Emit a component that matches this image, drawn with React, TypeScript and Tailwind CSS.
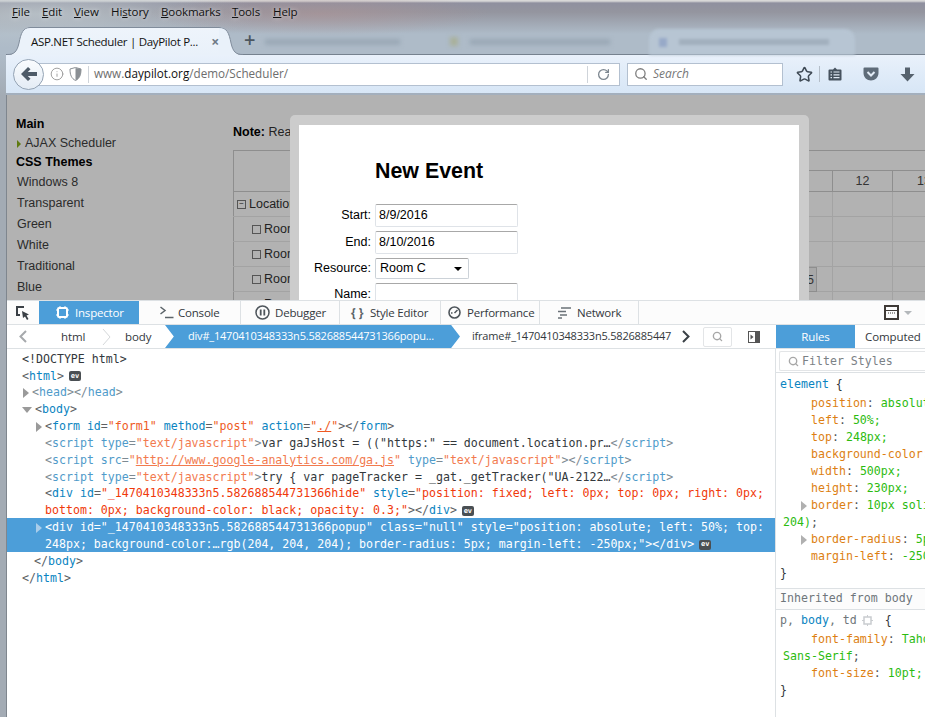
import React from 'react';
import { Info, RotateCw, Search, Star } from 'lucide-react';

type Seg = [string, string];

const B = 'text-[#5c6063]';
const N = 'text-[#0a84c1]';
const V = 'text-[#ee5a24]';
const R = 'text-[#f0390a]';
const T = 'text-[#33383c]';
const FB = 'text-[#7d8a92]';
const FN = 'text-[#4f9bca]';
const FV = 'text-[#f27a4e]';

const ui = "font-['Open_Sans',sans-serif]";
const page = "font-['Liberation_Sans',sans-serif]";
const mono = "font-['DejaVu_Sans_Mono',monospace]";

function Badge() {
  return (
    <span className="ml-[5px] inline-flex h-[10px] w-[12px] items-center justify-center rounded-[2px] bg-[#4a4f53] text-[7px] font-bold leading-none text-white">
      ev
    </span>
  );
}

function Arrow({ open, light }: { open?: boolean; light?: boolean }) {
  if (open) return <span className="mr-[3px] h-0 w-0 border-x-[5px] border-t-[6px] border-x-transparent border-t-[#9a9a9a]" />;
  return <span className={`mr-[3px] h-0 w-0 border-y-[5px] border-l-[6px] border-y-transparent ${light ? 'border-l-[#a9cdea]' : 'border-l-[#9a9a9a]'}`} />;
}

function CodeRow({ pl, segs, arrow, open, ev }: { pl: string; segs: Seg[]; arrow?: boolean; open?: boolean; ev?: boolean }) {
  return (
    <div className={`flex h-[16.85px] items-center whitespace-pre pt-[2px] ${pl}`}>
      {arrow && <Arrow open={open} />}
      {segs.map(([text, cls], i) => (
        <span key={i} className={cls}>{text}</span>
      ))}
      {ev && <Badge />}
    </div>
  );
}

function Scheduler() {
  const rows = ['Locations', 'Room A', 'Room B', 'Room C', 'Room D'];
  return (
    <div className="mt-[9px] w-[760px] border-t border-[#8e8e8e]">
      <div className="flex h-[41px] border-b border-[#8e8e8e]">
        <div className="w-[540px] border-l border-[#8e8e8e]" />
        <div className="flex-1">
          <div className="h-[20px] border-b border-[#8e8e8e]" />
          <div className="flex h-[20px] text-[12.5px] text-[#333]">
            <div className="w-[60px] border-r border-[#8e8e8e]" />
            <div className="flex w-[60px] items-center justify-center border-r border-[#8e8e8e]">12</div>
            <div className="flex w-[60px] items-center pl-[24px]">13</div>
          </div>
        </div>
      </div>
      {rows.map((r, i) => (
        <div key={r} className="flex h-[25px] border-b border-[#a3a3a3]">
          <div className={`flex w-[540px] items-center border-x border-[#8e8e8e] text-[12.5px] text-[#222] ${i === 0 ? 'pl-[3px]' : 'pl-[18px]'}`}>
            <span className="mr-[3px] flex h-[9px] w-[9px] items-center justify-center border border-[#555] text-[8px] leading-none">{i === 0 ? '−' : ''}</span>
            {r}
          </div>
          <div className="flex flex-1">
            <div className="w-[60px] border-r border-[#a3a3a3]">
              {i === 3 && <div className="ml-[-10px] h-[25px] w-[54px] border border-[#8e8e8e] bg-[#a8a8a8] pr-[2px] pt-[3px] text-right text-[12.5px] text-[#333]">5</div>}
            </div>
            <div className="w-[60px] border-r border-[#a3a3a3]" />
            <div className="w-[60px]" />
          </div>
        </div>
      ))}
    </div>
  );
}

function Field({ label, value, select }: { label: string; value?: string; select?: boolean }) {
  return (
    <div className="flex items-center">
      <div className="w-[76px] pr-[4px] text-right text-[12.5px] text-black">{label}</div>
      {select ? (
        <div className="flex h-[21px] w-[94px] items-center justify-between rounded-[2px] border border-[#ccd2d8] border-t-[#a8a8a8] pl-[4px] pr-[6px] text-[12.5px] text-black">
          Room C
          <span className="h-0 w-0 border-x-[4px] border-t-[4px] border-x-transparent border-t-black" />
        </div>
      ) : (
        <div className="flex h-[23px] w-[143px] items-center rounded-[2px] border border-[#dfe3e8] border-t-[#a8a8a8] pl-[3px] text-[12.5px] text-black">
          {value}
        </div>
      )}
    </div>
  );
}

function Menu() {
  const items: [string, string, string, string][] = [
    ['', 'F', 'ile', 'w-[30px]'],
    ['', 'E', 'dit', 'w-[32px]'],
    ['', 'V', 'iew', 'w-[37px]'],
    ['Hi', 's', 'tory', 'w-[50px]'],
    ['', 'B', 'ookmarks', 'w-[71px]'],
    ['', 'T', 'ools', 'w-[41px]'],
    ['', 'H', 'elp', 'w-[30px]'],
  ];
  return (
    <div className={`flex h-[24px] items-center pl-[12px] text-[11.5px] tracking-[-0.1px] text-[#111] ${ui}`}>
      {items.map(([a, u, c, w]) => (
        <span key={u + c} className={`whitespace-nowrap [text-shadow:0_0_4px_#ffffffaa] ${w}`}>
          {a}<span className="underline">{u}</span>{c}
        </span>
      ))}
    </div>
  );
}

function TabStrip() {
  return (
    <div className="relative z-10 -mb-px flex h-[31px] items-end pl-[7px]">
      <svg width="23" height="28" viewBox="0 0 23 28" className="shrink-0">
        <path d="M0 28 C7 28 10 25 12 16 C14 6 16 0 23 0 V28 Z" fill="#ebf2fa" />
        <path d="M0 27.500 C7 27.500 10 25 12 16 C14 6 16 0.500 23 0.500" fill="none" stroke="#808c9b" />
      </svg>
      <div className={`flex h-[28px] w-[189px] shrink-0 items-center border-t border-[#808c9b] bg-[linear-gradient(#eef4fb,#e9f1fa)] pl-[1px] text-[11.5px] tracking-[-0.3px] text-[#111] ${ui}`}>
        <span className="w-[172px] whitespace-nowrap">ASP.NET Scheduler | DayPilot P...</span>
        <span className="ml-[10px] text-[14px] font-bold leading-none text-[#6f7a86]">×</span>
      </div>
      <svg width="24" height="28" viewBox="0 0 24 28" className="shrink-0">
        <path d="M24 28 C17 28 14 25 12 16 C10 6 8 0 0 0 V28 Z" fill="#e9f1fa" />
        <path d="M24 27.500 C17 27.500 14 25 12 16 C10 6 8 0.500 0 0.500" fill="none" stroke="#808c9b" />
      </svg>
      <span className={`mb-[5px] ml-[1px] w-[11px] text-[20px] font-semibold leading-none text-[#4c5660] ${ui}`}>+</span>
      <div className="mb-[10px] ml-[10px] h-[6px] w-[135px] bg-[#9aa8b6] blur-[2px]" />
      <div className="mb-[9px] ml-[50px] h-[9px] w-[8px] bg-[#a9b09a] blur-[2px]" />
      <div className="mb-[10px] ml-[12px] h-[6px] w-[140px] bg-[#9aa8b6] blur-[2px]" />
      <div className="ml-[39px] flex h-[26px] w-[206px] items-center rounded-t-[10px] bg-[#b7c5d3] pl-[10px] blur-[1.5px]">
        <div className="h-[9px] w-[8px] bg-[#97a9c8]" />
        <div className="ml-[12px] h-[6px] w-[150px] bg-[#a1afbd]" />
      </div>
    </div>
  );
}

function NavBar() {
  return (
    <div className="ml-[6px] flex h-[41px] items-center border-y border-b-2 border-t-[#76828f] border-b-[#a3afbd] bg-[linear-gradient(#e9f1fb,#d7e6f6)] pl-[24px] pr-[9px]">
      <div className="relative flex h-[23px] w-[590px] items-center border border-[#b3c0d0] bg-white pl-[19px]">
        <div className="absolute left-[-18px] top-[-5px] flex h-[31px] w-[31px] items-center justify-center rounded-full border border-[#94a3b4] bg-[linear-gradient(#fafcfe,#e4ecf5)]">
          <svg width="16" height="14" viewBox="0 0 16 14"><path d="M7 0 L9.500 2.300 L6.800 5 H16 V9 H6.800 L9.500 11.700 L7 14 L0 7 Z" fill="#4e5b68" /></svg>
        </div>
        <Info size={14} strokeWidth={1.6} className="text-[#9a9a9a]" />
        <svg width="13" height="14" viewBox="0 0 13 14" className="ml-[5px]"><path d="M6.500 0.500 L12 2 C12 8 10.500 11.500 6.500 13.500 C2.500 11.500 1 8 1 2 Z" fill="#fff" stroke="#8a8f94" /><path d="M6.500 1 L12 2 C12 8 10.500 11.500 6.500 13.500 Z" fill="#8a8f94" /></svg>
        <div className="ml-[6px] mr-[5px] h-[17px] w-px bg-[#cfd4da]" />
        <span className={`text-[11.7px] text-[#6d6d6d] ${ui}`}>www.<span className="text-[#111]">daypilot.org</span>/demo/Scheduler/</span>
        <div className="ml-auto flex h-[17px] w-[32px] items-center justify-center border-l border-[#cfd4da]">
          <RotateCw size={13} strokeWidth={2.4} className="text-[#7d8790]" />
        </div>
      </div>
      <div className={`ml-[7px] flex h-[23px] w-[156px] shrink-0 items-center border border-[#b3c0d0] bg-white pl-[6px] text-[12px] italic text-[#777] ${ui}`}>
        <Search size={14} strokeWidth={2.2} className="mr-[5px] text-[#7d7d7d]" />
        Search
      </div>
      <Star size={17} strokeWidth={2.2} className="ml-[13px] text-[#3f4a55]" />
      <div className="ml-[6px] h-[16px] w-px bg-[#b4bec9]" />
      <svg width="14" height="14" viewBox="0 0 14 14" className="ml-[8px]">
        <path d="M1.500 2.500 H5 L7 0.500 L9 2.500 H12.500 A1 1 0 0 1 13.500 3.500 V12.500 A1 1 0 0 1 12.500 13.500 H1.500 A1 1 0 0 1 0.500 12.500 V3.500 A1 1 0 0 1 1.500 2.500 Z" fill="#46525e" />
        <path d="M2.500 5 H4 M5.500 5 H11.500 M2.500 7.800 H4 M5.500 7.800 H11.500 M2.500 10.600 H4 M5.500 10.600 H11.500" stroke="#dfe9f4" strokeWidth="1.200" />
      </svg>
      <svg width="16" height="14" viewBox="0 0 16 14" className="ml-[21px]">
        <path d="M1.500 0.500 H14.500 A1 1 0 0 1 15.500 1.500 V6 C15.500 10.500 12 13.500 8 13.500 C4 13.500 0.500 10.500 0.500 6 V1.500 A1 1 0 0 1 1.500 0.500 Z" fill="#5f6c79" />
        <path d="M4.500 5 L8 8.500 L11.500 5" fill="none" stroke="#e3ecf6" strokeWidth="2" />
      </svg>
      <svg width="15" height="15" viewBox="0 0 15 15" className="ml-[21px]"><path d="M5 0.500 H10 V7 H14.500 L7.500 14.500 L0.500 7 H5 Z" fill="#56626e" /></svg>
    </div>
  );
}

function PageArea() {
  const themes = ['Windows 8', 'Transparent', 'Green', 'White', 'Traditional', 'Blue'];
  return (
    <div className={`relative ml-[6px] flex h-[205px] overflow-hidden border-l border-[#7f868e] bg-[#b2b2b2] ${page}`}>
      <div className="w-[226px] shrink-0 pl-[9px] pt-[20px] text-[12.5px] text-[#2b2b2b]">
        <div className="h-[19px] font-bold text-black">Main</div>
        <div className="flex h-[19px] items-center pl-px">
          <span className="mr-[4px] h-0 w-0 border-y-[4px] border-l-[4px] border-y-transparent border-l-[#5f7a10]" />
          AJAX Scheduler
        </div>
        <div className="h-[19px] font-bold text-black">CSS Themes</div>
        {themes.map((t) => (
          <div key={t} className="flex h-[21px] items-center pl-px">{t}</div>
        ))}
      </div>
      <div className="pt-[28px] text-[12.5px] text-[#222]">
        <div className="h-[18px]"><b className="text-black">Note:</b> Read</div>
        <Scheduler />
      </div>
      {/* modal */}
      <div className="absolute left-[283px] top-[20px] h-[230px] w-[519px] rounded-[5px] bg-[#cccccc] pl-[9px] pr-[10px] pt-[10px]">
        <div className="h-[230px] bg-white">
          <div className="pl-[76px] pt-[32px] text-[21.4px] font-bold leading-[28px] text-black">New Event</div>
          <div className="flex flex-col gap-[4px] pt-[19px]">
            <Field label="Start:" value="8/9/2016" />
            <Field label="End:" value="8/10/2016" />
            <Field label="Resource:" select />
            <Field label="Name:" />
          </div>
        </div>
      </div>
    </div>
  );
}

function DevToolbar() {
  return (
    <div className={`flex h-[25px] items-stretch whitespace-nowrap border-y border-[#dde1e4] bg-[#fcfcfc] text-[11.5px] tracking-[-0.2px] text-[#33383c] ${ui}`}>
      <div className="flex w-[32px] shrink-0 items-center justify-center">
        <svg width="14" height="14" viewBox="0 0 14 14"><path d="M8 1 H1 V9 H4" fill="none" stroke="#3a4046" strokeWidth="2" /><path d="M6 5 L13 8.500 L10.500 9.500 L12.500 13 L11 14 L9 10.500 L7 12 Z" fill="#3a4046" /></svg>
      </div>
      <div className="flex w-[100px] shrink-0 items-center bg-[#4c9ed9] pl-[17px] text-white">
        <svg width="13" height="13" viewBox="0 0 13 13" className="mr-[6px]"><rect x="2" y="2" width="9" height="9" rx="1" fill="none" stroke="#fff" strokeWidth="2" /><path d="M4 0 V2 M9 0 V2 M4 11 V13 M9 11 V13 M0 4 H2 M0 9 H2 M11 4 H13 M11 9 H13" stroke="#fff" /></svg>
        Inspector
      </div>
      <div className="flex w-[102px] shrink-0 items-center border-r border-[#dde1e4] pl-[21px]">
        <svg width="14" height="13" viewBox="0 0 14 13" className="mr-[4px]"><path d="M0.500 1 L5 4.500 L0.500 8 M5 11.500 H13.500" fill="none" stroke="#5c6469" strokeWidth="1.500" /></svg>
        Console
      </div>
      <div className="flex w-[99px] shrink-0 items-center border-r border-[#dde1e4] pl-[14px]">
        <svg width="15" height="15" viewBox="0 0 15 15" className="mr-[5px]"><circle cx="7.500" cy="7.500" r="6.500" fill="none" stroke="#4e555b" strokeWidth="1.500" /><path d="M5.700 4.500 V10.500 M9.300 4.500 V10.500" stroke="#4e555b" strokeWidth="1.800" /></svg>
        Debugger
      </div>
      <div className="flex w-[101px] shrink-0 items-center border-r border-[#dde1e4] pl-[11px]">
        <span className="mr-[5px] w-[14px] text-[12px] font-bold tracking-normal text-[#5c6469]">{'{ }'}</span>
        Style Editor
      </div>
      <div className="flex w-[99px] shrink-0 items-center border-r border-[#dde1e4] pl-[7px]">
        <svg width="13" height="13" viewBox="0 0 13 13" className="mr-[6px]"><circle cx="6.500" cy="6.500" r="5.500" fill="none" stroke="#4e555b" strokeWidth="1.600" /><path d="M6.500 7 L9.500 4 M3 7 H4.500" stroke="#4e555b" strokeWidth="1.500" /></svg>
        Performance
      </div>
      <div className="flex w-[99px] shrink-0 items-center border-r border-[#dde1e4] pl-[18px]">
        <svg width="13" height="12" viewBox="0 0 13 12" className="mr-[6px]"><path d="M3 1 H13 M0 4.500 H8 M2 8 H9 M0 11 H4" stroke="#6a7177" strokeWidth="1.500" /></svg>
        Network
      </div>
      <div className="ml-auto flex items-center pr-[13px]">
        <svg width="15" height="15" viewBox="0 0 15 15"><rect x="1" y="1" width="13" height="13" fill="none" stroke="#3f3a36" strokeWidth="2" /><path d="M1 5.500 H14" stroke="#3f3a36" /><path d="M4 8 H11" stroke="#3f3a36" strokeDasharray="1 1" /></svg>
        <span className="ml-[5px] h-0 w-0 border-x-[4px] border-t-[4px] border-x-transparent border-t-[#b4b8bb]" />
      </div>
    </div>
  );
}

function Breadcrumbs() {
  return (
    <div className={`flex h-[24px] items-center whitespace-nowrap border-b border-[#dde1e4] bg-white text-[11.5px] tracking-[-0.1px] text-[#33383c] ${ui}`}>
      <svg width="8" height="13" viewBox="0 0 8 13" className="ml-[12px] shrink-0"><path d="M7 1 L1.500 6.500 L7 12" fill="none" stroke="#a6a9ac" strokeWidth="2" /></svg>
      <span className="ml-[34px] w-[25px] shrink-0">html</span>
      <svg width="9" height="24" viewBox="0 0 9 24" className="ml-[16px] shrink-0"><path d="M1 4 L8 12 L1 20" fill="none" stroke="#d5d8da" /></svg>
      <span className="ml-[14px] w-[27px] shrink-0">body</span>
      <div className="ml-[13px] flex h-[23px] w-[295px] shrink-0 items-center bg-[#4c9ed9] pl-[23px] text-[11px] tracking-[-0.2px] text-white [clip-path:polygon(0_0,97%_0,100%_50%,97%_100%,0_100%,3%_50%)]">
        div#_1470410348333n5.582688544731366popu...
      </div>
      <span className="ml-[12px] w-[200px] shrink-0 text-[11px] tracking-[-0.2px]">iframe#_1470410348333n5.5826885447</span>
      <svg width="8" height="13" viewBox="0 0 8 13" className="ml-[10px] shrink-0"><path d="M1 1 L6.500 6.500 L1 12" fill="none" stroke="#3a4046" strokeWidth="2" /></svg>
      <div className="ml-[13px] flex h-[20px] w-[29px] shrink-0 items-center justify-center rounded-[2px] border border-[#e3e5e7]">
        <Search size={11} strokeWidth={3} className="text-[#a7a7a7]" />
      </div>
      <svg width="12" height="12" viewBox="0 0 12 12" className="ml-[16px] shrink-0"><rect x="0.500" y="0.500" width="11" height="11" fill="none" stroke="#555" /><rect x="7" y="0.500" width="4.500" height="11" fill="#555" /><path d="M2.500 3.500 L5.500 6 L2.500 8.500 Z" fill="#555" /></svg>
      <div className="ml-[16px] flex h-[23px] w-[79px] shrink-0 items-center justify-center bg-[#4c9ed9] text-white">Rules</div>
      <span className="ml-[10px]">Computed</span>
    </div>
  );
}

function Markup() {
  return (
    <div className={`h-[368px] w-[769px] shrink-0 overflow-hidden border-r border-[#dde1e4] pt-[1px] text-[11.6px] ${mono}`}>
      <CodeRow pl="pl-[15px]" segs={[['<!DOCTYPE html>', T]]} />
      <CodeRow pl="pl-[15px]" segs={[['<', B], ['html', N], ['>', B]]} ev />
      <CodeRow pl="pl-[16px]" arrow segs={[['<', FB], ['head', FN], ['></', FB], ['head', FN], ['>', FB]]} />
      <CodeRow pl="pl-[15px]" arrow open segs={[['<', B], ['body', N], ['>', B]]} />
      <CodeRow pl="pl-[29px]" arrow segs={[['<', B], ['form', N], [' id', N], ['=', B], ['"form1"', V], [' method', N], ['=', B], ['"post"', V], [' action', N], ['=', B], ['"', V], ['./', `${V} underline`], ['"', V], ['></', B], ['form', N], ['>', B]]} />
      <CodeRow pl="pl-[38px]" segs={[['<', FB], ['script', FN], [' type', FN], ['=', FB], ['"text/javascript"', FV], ['>', FB], ['var gaJsHost = (("https:" == document.location.pr…', T], ['</', FB], ['script', FN], ['>', FB]]} />
      <CodeRow pl="pl-[38px]" segs={[['<', FB], ['script', FN], [' src', FN], ['=', FB], ['"', FV], ['http://www.google-analytics.com/ga.js', `${FV} underline`], ['"', FV], [' type', FN], ['=', FB], ['"text/javascript"', FV], ['></', FB], ['script', FN], ['>', FB]]} />
      <CodeRow pl="pl-[38px]" segs={[['<', FB], ['script', FN], [' type', FN], ['=', FB], ['"text/javascript"', FV], ['>', FB], ['try { var pageTracker = _gat._getTracker("UA-2122…', T], ['</', FB], ['script', FN], ['>', FB]]} />
      <CodeRow pl="pl-[38px]" segs={[['<', B], ['div', N], [' id', N], ['=', B], ['"_1470410348333n5.582688544731366hide"', R], [' style', N], ['=', B], ['"position: fixed; left: 0px; top: 0px; right: 0px;', R]]} />
      <CodeRow pl="pl-[38px]" segs={[['bottom: 0px; background-color: black; opacity: 0.3;"', R], ['></', B], ['div', N], ['>', B]]} ev />
      <div className="bg-[#4c9ed9] text-white">
        <div className="flex h-[16.85px] items-center whitespace-pre pl-[29px] pt-[2px]">
          <Arrow light />
          {'<div id="_1470410348333n5.582688544731366popup" class="null" style="position: absolute; left: 50%; top:'}
        </div>
        <div className="flex h-[16.85px] items-center whitespace-pre pl-[38px] pt-[2px]">
          {'248px; background-color:…rgb(204, 204, 204); border-radius: 5px; margin-left: -250px;"></div>'}
          <Badge />
        </div>
      </div>
      <CodeRow pl="pl-[27px]" segs={[['</', B], ['body', N], ['>', B]]} />
      <CodeRow pl="pl-[15px]" segs={[['</', B], ['html', N], ['>', B]]} />
    </div>
  );
}

function Decl({ name, value, arrow }: { name: string; value: string; arrow?: boolean }) {
  return (
    <div className={`flex h-[17px] items-center whitespace-pre ${arrow ? 'pl-[25px]' : 'pl-[35px]'}`}>
      {arrow && <span className="mr-[4px] h-0 w-0 border-y-[5px] border-l-[6px] border-y-transparent border-l-[#b0b0b0]" />}
      <span className="text-[#dd7f12]">{name}</span>
      <span className="text-[#4f5356]">: </span>
      <span className="text-[#2cbb0f]">{value}</span>
    </div>
  );
}

function RulesPane() {
  return (
    <div className={`min-w-0 flex-1 overflow-hidden text-[11.6px] ${mono}`}>
      <div className="h-[24px] border-b border-[#dde1e4] pl-[3px] pt-[2px]">
        <div className="flex h-[20px] items-center rounded-l-[2px] border border-r-0 border-[#e3e5e7] pl-[8px] text-[#7b8186]">
          <Search size={11} strokeWidth={3} className="mr-[3px] shrink-0 text-[#a7a7a7]" />
          <span className="whitespace-pre pt-[2px]">Filter Styles</span>
        </div>
      </div>
      <div className="flex h-[20px] items-end whitespace-pre pl-[4px] text-[#0a84c1]">element<span className="text-[#33383c]"> {'{'}</span></div>
      <div className="pt-[2px]">
        <Decl name="position" value="absolute;" />
        <Decl name="left" value="50%;" />
        <Decl name="top" value="248px;" />
        <Decl name="background-color" value="rgb" />
        <Decl name="width" value="500px;" />
        <Decl name="height" value="230px;" />
        <Decl name="border" value="10px solid" arrow />
        <div className="flex h-[17px] items-center pl-[7px] text-[#2cbb0f]">204)<span className="text-[#4f5356]">;</span></div>
        <Decl name="border-radius" value="5px;" arrow />
        <Decl name="margin-left" value="-250px;" />
        <div className="flex h-[17px] items-center pl-[4px] text-[#33383c]">{'}'}</div>
      </div>
      <div className="mt-[6px] flex h-[22px] items-center whitespace-pre border-y border-[#dde1e4] bg-[#fcfcfc] pl-[4px] text-[#6f767b]">Inherited from body</div>
      <div className="flex h-[21px] items-center whitespace-pre pl-[4px] text-[#6f767b]">
        p, <span className="text-[#0a84c1]">body</span>, td
        <svg width="11" height="11" viewBox="0 0 11 11" className="mx-[5px] shrink-0"><rect x="2" y="2" width="7" height="7" fill="none" stroke="#c9cccf" strokeWidth="1.500" /><path d="M5.500 0 V11 M0 5.500 H11" stroke="#c9cccf" strokeDasharray="2 7 2" /></svg>
        <span className="text-[#33383c]"> {'{'}</span>
      </div>
      <Decl name="font-family" value="Tahoma," />
      <div className="flex h-[17px] items-center pl-[7px] text-[#2cbb0f]">Sans-Serif<span className="text-[#4f5356]">;</span></div>
      <Decl name="font-size" value="10pt;" />
      <div className="flex h-[17px] items-center pl-[4px] text-[#33383c]">{'}'}</div>
    </div>
  );
}

export default function App() {
  return (
    <div className="flex h-[717px] w-[925px] flex-col overflow-hidden bg-[radial-gradient(ellipse_170px_22px_at_320px_14px,rgba(178,146,146,0.5),transparent),radial-gradient(ellipse_220px_34px_at_40px_14px,rgba(190,200,206,0.8),transparent),linear-gradient(#d8d8d8_0px,#d8d8d8_1px,#8f909f_3px,#94959f_12px,#aebbc8_34px,#aebbc8_54px,#a3abb4_96px,#a3abb4_100%)]">
      <Menu />
      <TabStrip />
      <NavBar />
      <PageArea />
      <div className="ml-[6px] flex h-[417px] flex-col border-l border-[#7f868e] bg-white">
        <DevToolbar />
        <Breadcrumbs />
        <div className="flex min-h-0 flex-1">
          <Markup />
          <RulesPane />
        </div>
      </div>
    </div>
  );
}
